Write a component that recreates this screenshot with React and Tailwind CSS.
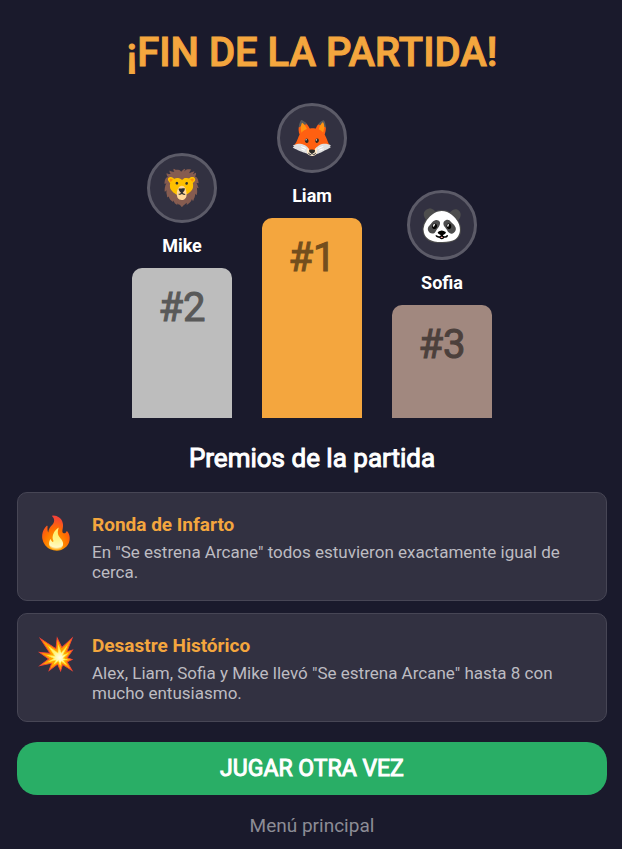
const players = [
  { name: 'Mike', avatar: '🦁', rank: 2, bar: 'h-[150px] bg-[#bdbdbd] text-[#595959]' },
  { name: 'Liam', avatar: '🦊', rank: 1, bar: 'h-[200px] bg-[#f4a63e] text-[#734e1d]' },
  { name: 'Sofia', avatar: '🐼', rank: 3, bar: 'h-[113px] bg-[#a1887f] text-[#4c403c]' },
];

const awards = [
  {
    icon: '🔥',
    title: 'Ronda de Infarto',
    text: 'En "Se estrena Arcane" todos estuvieron exactamente igual de cerca.',
  },
  {
    icon: '💥',
    title: 'Desastre Histórico',
    text: 'Alex, Liam, Sofia y Mike llevó "Se estrena Arcane" hasta 8 con mucho entusiasmo.',
  },
];

const Player = ({ name, avatar, rank, bar }) => (
  <li className="flex w-[100px] flex-col items-center">
    <span className="flex size-[70px] items-center justify-center rounded-full border-[3px] border-[#5c5b68] bg-[#323141] text-[35px] leading-none">
      {avatar}
    </span>
    <span className="my-3 text-lg leading-[21px] font-bold text-white">{name}</span>
    <div className={`w-full rounded-t-[10px] pt-4 text-center text-[40px] leading-[47px] [-webkit-text-stroke:1px] ${bar}`}>
      #{rank}
    </div>
  </li>
);

const Award = ({ icon, title, text }) => (
  <li className="flex gap-4 rounded-[10px] border border-[#474655] bg-[#323141] px-[18px] pt-[21px] pb-[18px]">
    <span className="flex w-10 shrink-0 justify-center text-[32px] leading-[38px]">{icon}</span>
    <div>
      <h3 className="text-[19px] leading-[22px] font-bold text-[#f4a63e]">{title}</h3>
      <p className="mt-1.5 text-[17px] leading-5 text-[#bdbcc2]">{text}</p>
    </div>
  </li>
);

const App = () => {
  return (
    <main className="flex min-h-screen flex-col bg-[#1a1a2c] pt-7 pr-[15px] pl-[17px] font-['Roboto',sans-serif]">
      <h1 className="text-center text-[40px] leading-[49px] font-medium text-[#f4a63e] [-webkit-text-stroke:1px]">
        ¡FIN DE LA PARTIDA!
      </h1>

      <ol className="mt-[26px] flex items-end justify-center gap-[30px]">
        {players.map((player) => (
          <Player key={player.rank} {...player} />
        ))}
      </ol>

      <h2 className="mt-6 text-center text-[26px] leading-8 text-white [-webkit-text-stroke:1px]">
        Premios de la partida
      </h2>
      <ul className="mt-[18px] flex flex-col gap-3">
        {awards.map((award) => (
          <Award key={award.title} {...award} />
        ))}
      </ul>

      <button
        type="button"
        className="mt-5 h-[53px] rounded-[20px] bg-[#29ae66] pt-0.5 text-[23px] text-white [-webkit-text-stroke:1px]"
      >
        JUGAR OTRA VEZ
      </button>
      <button type="button" className="mt-5 self-center text-[19px] leading-[22px] text-[#8c8c95]">
        Menú principal
      </button>
    </main>
  );
};

export default App;
